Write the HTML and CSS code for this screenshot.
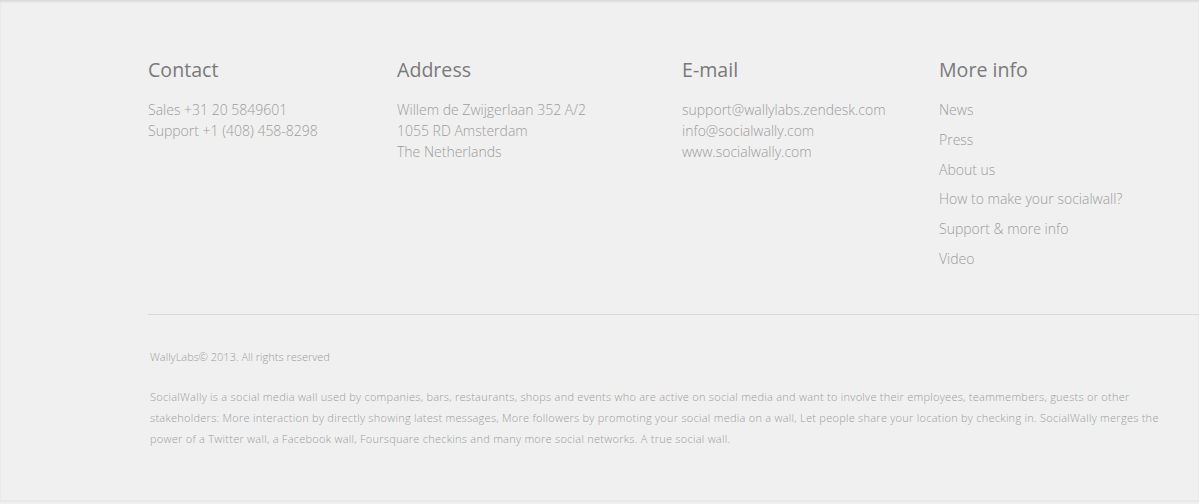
FILE: index.html
```html
<!DOCTYPE html>
<html lang="en">
<head>
<meta charset="utf-8">
<title>SocialWally footer</title>
<link rel="stylesheet" href="styles.css">
</head>
<body>
<footer class="footer">
  <div class="cols">
    <section class="col col-contact">
      <h3 class="col-title">Contact</h3>
      <p class="col-text">Sales +31 20 5849601<br>Support +1 (408) 458-8298</p>
    </section>
    <section class="col col-address">
      <h3 class="col-title">Address</h3>
      <p class="col-text">Willem de Zwijgerlaan 352 A/2<br>1055 RD Amsterdam<br>The Netherlands</p>
    </section>
    <section class="col col-email">
      <h3 class="col-title">E-mail</h3>
      <p class="col-text">support@wallylabs.zendesk.com<br>info@socialwally.com<br>www.socialwally.com</p>
    </section>
    <section class="col col-more">
      <h3 class="col-title">More info</h3>
      <ul class="links">
        <li><a href="#">News</a></li>
        <li><a href="#">Press</a></li>
        <li><a href="#">About us</a></li>
        <li><a href="#">How to make your socialwall?</a></li>
        <li><a href="#">Support &amp; more info</a></li>
        <li><a href="#">Video</a></li>
      </ul>
    </section>
  </div>
  <hr class="rule">
  <div class="legal">
    <p class="copy">WallyLabs© 2013. All rights reserved</p>
    <p class="about">SocialWally is a social media wall used by companies, bars, restaurants, shops and events who are active on social media and want to involve their employees, teammembers, guests or other stakeholders: More interaction by directly showing latest messages, More followers by promoting your social media on a wall, Let people share your location by checking in. SocialWally merges the power of a Twitter wall, a Facebook wall, Foursquare checkins and many more social networks. A true social wall.</p>
  </div>
</footer>
</body>
</html>
```

FILE: styles.css
```css
html, body {
  margin: 0;
  padding: 0;
  height: 100%;
}
body {
  background: #f0f0f0;
  font-family: "Open Sans", "Liberation Sans", sans-serif;
  font-weight: 300;
  color: #999;
  overflow: hidden;
}
.footer {
  height: 502px;
  box-sizing: border-box;
  border-bottom: 2px solid #e8e8e8;
  box-shadow: inset 0 2px 2px rgba(0, 0, 0, 0.09);
  padding: 57px 0 0 148px;
}
.cols {
  display: grid;
  grid-template-columns: 249px 285px 257px 1fr;
}
.col-title {
  margin: 0 0 16px;
  font-size: 19.6px;
  line-height: 26px;
  font-weight: 400;
  color: #7a7a7a;
}
.col-text {
  margin: 0;
  font-size: 14px;
  line-height: 21px;
  color: #9c9c9c;
}
.links {
  list-style: none;
  margin: 0;
  padding: 0;
}
.links li {
  font-size: 14px;
  line-height: 21px;
  margin-bottom: 8.8px;
}
.links a {
  color: #9c9c9c;
  text-decoration: none;
}
.rule {
  margin: 36px 0 0;
  border: 0;
  border-top: 1px solid #d9d9d9;
  height: 0;
}
.legal {
  padding: 31px 0 0 2px;
}
.copy {
  margin: 0 0 19px;
  font-size: 11px;
  line-height: 21px;
  color: #9c9c9c;
}
.about {
  margin: 0;
  width: 1025px;
  font-size: 11px;
  letter-spacing: 0.26px;
  line-height: 21px;
  color: #9c9c9c;
}
```
